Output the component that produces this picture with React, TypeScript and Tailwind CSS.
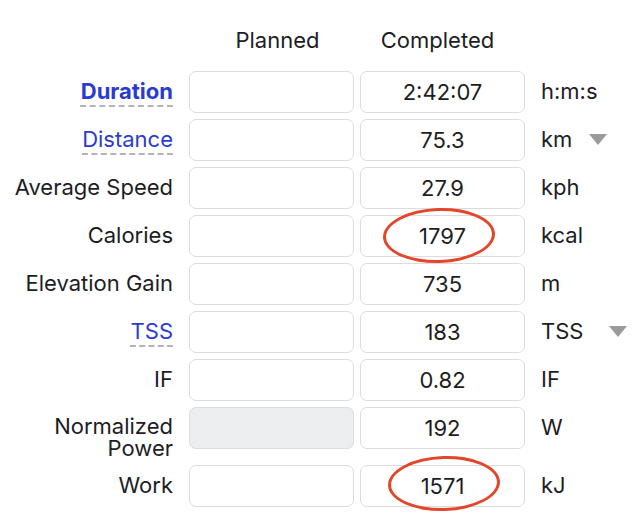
import React from 'react';

type Row = {
  label: string;
  link?: 'bold' | 'normal';
  completed: string;
  unit: string;
  dropdown?: number; // left margin of the little triangle
  plannedDisabled?: boolean;
  tall?: boolean;
  circled?: { left: number; top: number };
};

const rows: Row[] = [
  { label: 'Duration', link: 'bold', completed: '2:42:07', unit: 'h:m:s' },
  { label: 'Distance', link: 'normal', completed: '75.3', unit: 'km', dropdown: 17 },
  { label: 'Average Speed', completed: '27.9', unit: 'kph' },
  { label: 'Calories', completed: '1797', unit: 'kcal', circled: { left: 22, top: -8 } },
  { label: 'Elevation Gain', completed: '735', unit: 'm' },
  { label: 'TSS', link: 'normal', completed: '183', unit: 'TSS', dropdown: 26 },
  { label: 'IF', completed: '0.82', unit: 'IF' },
  { label: 'Normalized Power', completed: '192', unit: 'W', plannedDisabled: true, tall: true },
  { label: 'Work', completed: '1571', unit: 'kJ', circled: { left: 27, top: -10 } },
];

const Caret = ({ ml }: { ml: number }) => (
  <svg width="18" height="11" viewBox="0 0 18 11" style={{ marginLeft: ml }} className="shrink-0">
    <path d="M0 0 H18 L9 11 Z" fill="#9a9a9a" />
  </svg>
);

const App: React.FC = () => {
  return (
    <div
      className="w-[634px] h-[528px] bg-white text-[22px] text-[#1d1d1f] overflow-hidden"
      style={{ fontFamily: 'Inter, "Noto Sans", sans-serif' }}
    >
      {/* Column headers */}
      <div className="flex pt-[28px] h-[71px]">
        <div className="w-[189px]" />
        <div className="w-[165px] text-center leading-[24px] pl-[12px]">Planned</div>
        <div className="w-[6px]" />
        <div className="w-[165px] text-center leading-[24px] pr-[10px]">Completed</div>
      </div>

      {rows.map((r) => (
        <div key={r.label} className={`flex items-start mb-[6px] ${r.tall ? 'h-[52px]' : 'h-[42px]'}`}>
          {/* Label */}
          <div
            className={`w-[173px] shrink-0 text-right ${
              r.tall ? 'pt-[8px] leading-[22px]' : 'h-[42px] flex items-center justify-end leading-none pb-[3px]'
            }`}
          >
            {r.link ? (
              <span
                className={`text-[#2b3bcf] underline decoration-dashed decoration-[#b4b4b4] decoration-2 underline-offset-[7px] ${
                  r.link === 'bold' ? 'font-bold' : ''
                }`}
              >
                {r.label}
              </span>
            ) : r.tall ? (
              <>
                Normalized
                <br />
                Power
              </>
            ) : (
              r.label
            )}
          </div>

          {/* Planned */}
          <div
            className={`ml-[16px] w-[165px] h-[42px] shrink-0 rounded-[7px] border-[1.5px] border-[#dcdcdc] ${
              r.plannedDisabled ? 'bg-[#eceef0]' : 'bg-white'
            }`}
          />

          {/* Completed */}
          <div className="relative ml-[6px] w-[165px] h-[42px] shrink-0 rounded-[7px] border-[1.5px] border-[#dcdcdc] flex items-center justify-center">
            <span className="leading-none">{r.completed}</span>
            {r.circled && (
              <div
                className="absolute w-[112px] h-[55px] rounded-[50%] border-[3px] border-[#e2462b] -rotate-2"
                style={{ left: r.circled.left, top: r.circled.top }}
              />
            )}
          </div>

          {/* Unit */}
          <div className="ml-[16px] h-[42px] flex items-center leading-none pb-[2px]">
            <span>{r.unit}</span>
            {r.dropdown !== undefined && <Caret ml={r.dropdown} />}
          </div>
        </div>
      ))}
    </div>
  );
};

export default App;
